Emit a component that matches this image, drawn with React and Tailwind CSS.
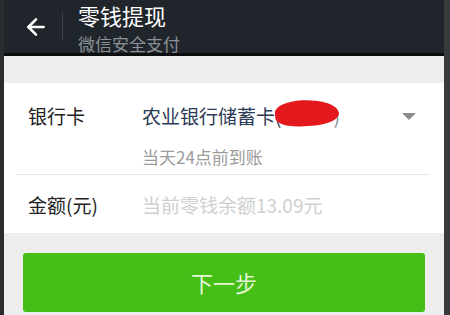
import React from 'react'
import { ArrowLeft } from 'lucide-react'

const font = { fontFamily: '"Noto Sans CJK SC", "Noto Sans", sans-serif' }

const App = () => {
  return (
    <div className="flex w-[450px] h-[315px] overflow-hidden bg-[#ecedec]" style={font}>
      <div className="w-[4px] bg-[#2a2d30]"></div>
      <div className="flex-1 flex flex-col">
        <header className="h-[56px] shrink-0 bg-[#1f252a] border-b-[3px] border-[#0c0e10] flex items-center">
          <div className="w-[58px] flex justify-center pl-[6px]">
            <ArrowLeft className="w-[26px] h-[26px] text-white" strokeWidth={2.4} />
          </div>
          <div className="w-px h-[28px] bg-[#3b4146] mb-[2px]"></div>
          <div className="pl-[15px] flex flex-col self-start pt-[1px]">
            <span className="text-white text-[22px] leading-[28px]">零钱提现</span>
            <span className="text-[#8b9196] text-[17px] leading-[21px] mt-[4px]">微信安全支付</span>
          </div>
        </header>
        <div className="h-[27px] shrink-0"></div>
        <section className="bg-white h-[150px] shrink-0 flex flex-col">
          <div className="flex items-center h-[62px] pt-[4px]">
            <span className="w-[138px] pl-[24px] text-[19px] text-[#222]">银行卡</span>
            <span className="text-[19px] text-[#2c3b55] flex items-center">
              农业银行储蓄卡(
              <span className="relative inline-block w-[52px] h-[24px]">
                <span className="absolute left-[-6px] top-[-4px] w-[64px] h-[26px] bg-[#e3191e] rounded-[45%_60%_45%_40%] -rotate-3"></span>
              </span>
              <span className="text-[#8a8f99]">)</span>
            </span>
            <span className="ml-auto mr-[28px] w-0 h-0 border-l-[7px] border-r-[7px] border-t-[7px] border-l-transparent border-r-transparent border-t-[#8c8c8c]"></span>
          </div>
          <div className="pl-[138px] text-[17px] text-[#9b9b9b] h-[29px] leading-[24px]">当天24点前到账</div>
          <div className="ml-[12px] mr-[14px] h-px bg-[#e8e8e8]"></div>
          <div className="flex items-center flex-1 pt-[2px]">
            <span className="w-[138px] pl-[24px] text-[19px] text-[#222]">金额(元)</span>
            <span className="text-[19px] text-[#cfcfcf]">当前零钱余额13.09元</span>
          </div>
        </section>
        <div className="px-[19px] pt-[20px]">
          <button className="w-full h-[59px] bg-[#45bf17] rounded-[3px] text-[22px] text-[#e4f6d6]">下一步</button>
        </div>
      </div>
      <div className="w-[6px] bg-[#3a3b3c]"></div>
    </div>
  )
}

export default App
